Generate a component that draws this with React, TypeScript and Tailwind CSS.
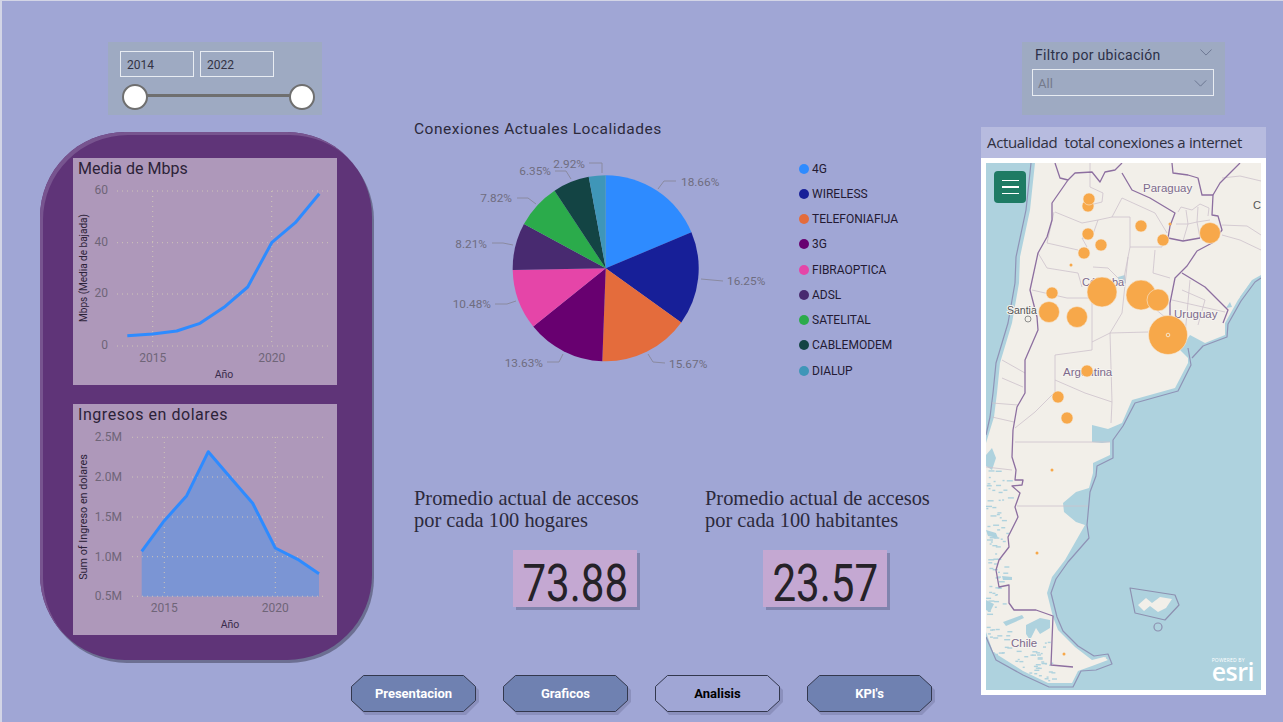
import React from "react";

const pieData = [
  { name: "4G", value: 18.66, color: "#2e8bff" },
  { name: "WIRELESS", value: 16.25, color: "#171f98" },
  { name: "TELEFONIAFIJA", value: 15.67, color: "#e46c3c" },
  { name: "3G", value: 13.63, color: "#680070" },
  { name: "FIBRAOPTICA", value: 10.48, color: "#e545a8" },
  { name: "ADSL", value: 8.21, color: "#482a70" },
  { name: "SATELITAL", value: 7.82, color: "#2bab4b" },
  { name: "CABLEMODEM", value: 6.35, color: "#134444" },
  { name: "DIALUP", value: 2.92, color: "#3f96b8" },
];

const pieLabels = [
  { text: "18.66%", x: 681, y: 182, anchor: "start", line: "658 189 664 181 676 181" },
  { text: "16.25%", x: 727, y: 281, anchor: "start", line: "701 279 723 281" },
  { text: "15.67%", x: 669, y: 364, anchor: "start", line: "648 354 653 362 665 363" },
  { text: "13.63%", x: 543, y: 363, anchor: "end", line: "563 354 559 362 547 362" },
  { text: "10.48%", x: 491, y: 304, anchor: "end", line: "516 301 507 304 495 304" },
  { text: "8.21%", x: 487, y: 244, anchor: "end", line: "513 245 503 243 492 243" },
  { text: "7.82%", x: 512, y: 198, anchor: "end", line: "536 204 528 198 517 198" },
  { text: "6.35%", x: 551, y: 171, anchor: "end", line: "571 179 566 171 555 171" },
  { text: "2.92%", x: 585, y: 164, anchor: "end", line: "602 173 602 163 589 163" },
];

const bubbles = [
  [1088, 206, 6], [1089, 199, 6], [1088, 234, 6], [1101, 245, 6], [1084, 253, 6], [1071, 265, 1.5],
  [1141, 226, 6], [1163, 240, 6], [1170, 224, 1.5], [1210, 233, 10.5], [1102, 292, 15], [1141, 295, 15],
  [1158, 300, 11], [1052, 293, 6], [1049, 312, 10.5], [1077, 317, 10.5], [1168, 335, 19.5],
  [1087, 371, 6], [1058, 397, 6], [1067, 418, 6], [1052, 470, 1.5], [1037, 553, 1.5], [1064, 654, 1.5],
];

const landPath =
  "M1035 163 L1030 210 L1020 257 L1019 283 L1012 323 L1000 363 L997 393 L994 417 L986 443 L986 632 L993 652 L1023 671 L1048 683 L1072 683 L1078 671 L1092 666 L1108 660 L1104 657 L1092 660 L1075 647 L1058 630 L1053 617 L1047 593 L1052 577 L1065 560 L1085 525 L1076 522 L1064 512 L1063 503 L1076 492 L1089 488 L1093 473 L1093 463 L1110 455 L1110 442 L1102 443 L1092 442 L1092 425 L1108 429 L1122 423 L1132 400 L1175 388 L1188 363 L1188 358 L1180 350 L1190 335 L1205 343 L1225 335 L1225 323 L1238 300 L1252 280 L1261 275 L1261 163 Z";

const coastLines = [
  "M986 637 L996 660 L1023 675 L1049 687 L1073 687 L1081 671 L1096 670 L1112 664 L1108 654 L1094 656 L1078 646 L1063 631 L1057 617 L1051 593 L1056 579 L1068 562 L1089 538 L1087 525 L1090 492 L1096 476 L1097 466 L1113 458 L1113 440 L1123 426 L1135 403 L1178 391 L1191 365 L1188 348",
  "M1031 163 L1026 210 L1016 257 L1015 283 L1008 323 L996 363 L993 393 L990 417 L986 435",
  "M1192 358 L1203 346 L1227 337 L1228 324 L1241 301 L1255 282 L1261 278",
];

const borders = [
  "M1055 163 L1060 178 L1068 180 L1052 203 L1052 220 L1047 237 L1038 253 L1030 290 L1037 317 L1038 330 L1025 360 L1025 393 L1017 407 L1013 430 L1012 457 L1016 470 L1015 480 L1023 480 L1022 485 L1012 486 L1020 493 L1015 507 L1018 517 L1008 537 L1009 547 L999 560 L996 570 L999 587 L1009 585 L1009 603 L1014 610 L1036 610 L1053 616 L1051 665 L1073 667",
  "M1068 180 L1075 173 L1092 172 L1100 182 L1105 172 L1115 170 L1122 163",
  "M1122 173 L1132 190 L1150 198 L1175 213 L1170 226 L1168 238 L1183 241 L1200 238",
  "M1172 163 L1173 173 L1188 175 L1198 178 L1202 195 L1213 195 L1212 215 L1218 216 L1222 230 L1212 243 L1197 251 L1187 266 L1175 278 L1170 303 L1170 333",
  "M1182 273 L1205 287 L1228 310 L1223 323",
  "M1240 163 L1220 183 L1213 195",
];

const provinces = [
  "M1090 163 L1090 187 L1103 193 L1102 202 L1090 205",
  "M1122 198 L1112 217 L1130 217 L1130 247 L1162 247 L1163 238",
  "M1122 198 L1155 213 L1167 233",
  "M1098 220 L1112 217 M1098 220 L1092 237 L1082 238 L1087 247 M1098 220 L1082 223 L1055 212",
  "M1130 247 L1123 283 L1108 268 L1093 267",
  "M1054 212 L1047 243 L1078 250 M1038 253 L1047 268 L1078 273 L1082 287",
  "M1032 290 L1067 298 L1092 298 L1092 350 L1055 355 L1055 392 L1035 412 L1015 428",
  "M1092 342 L1110 333 L1148 332 M1110 333 L1112 402 L1111 423",
  "M1055 380 L1085 393 L1112 402",
  "M1015 442 L1110 442 M1017 506 L1088 506",
  "M1155 250 L1153 273 L1170 278 M1128 257 L1122 313 L1110 333 M1148 303 L1172 323",
  "M1222 178 L1240 176 L1261 181 M1222 225 L1247 226 L1261 235 M1222 235 L1240 240 L1261 250",
  "M1178 212 L1181 207 L1192 210 L1200 204 L1209 208 L1208 216 M1186 210 L1188 224 L1183 241 M1198 207 L1197 222 L1200 238 M1176 224 L1188 224 L1197 222 L1210 220",
  "M1182 290 L1205 300 L1198 325 M1172 300 L1225 312 M1190 280 L1185 335",
  "M1002 378 L1023 387 M992 403 L1018 405 M992 417 L1014 422 M986 467 L1012 470 M1002 360 L1025 373",
];

// blue patches of the southern fjords
const fjordPatches = [
  "M1026 625 L1040 618 L1050 620 L1050 628 L1040 634 L1036 628 L1030 640 L1026 634 Z",
  "M1003 622 L1022 615 L1024 618 L1006 626 Z",
  "M1002 576 L1012 577 L1012 580 L1003 580 Z",
  "M986 530 L996 533 L998 538 L988 536 Z",
  "M986 600 L994 604 L990 612 L986 610 Z",
  "M986 455 L992 448 L996 458 L992 470 L986 466 Z",
];

const specks = Array.from({ length: 130 }, (_, i) => {
  const a = Math.abs(Math.sin(i * 12.9898) * 43758.5453) % 1;
  const b = Math.abs(Math.sin(i * 78.233) * 12543.1234) % 1;
  if (i % 3 === 0) return { x: 1012 + a * 40, y: 640 + b * 40, w: 2 + (i % 4) };
  return { x: 986 + a * (i % 2 ? 22 : 12), y: 470 + b * 185, w: 2 + (i % 5) };
});

function Pie() {
  const cx = 605.7;
  const cy = 268.3;
  const r = 93;
  const total = pieData.reduce((s, d) => s + d.value, 0);
  let acc = 0;
  return (
    <svg width="380" height="230" viewBox="414 150 380 230" className="block shrink-0">
      {pieData.map((d) => {
        const a0 = (acc / total) * 2 * Math.PI;
        acc += d.value;
        const a1 = (acc / total) * 2 * Math.PI;
        const large = a1 - a0 > Math.PI ? 1 : 0;
        const path = `M${cx} ${cy} L${cx + r * Math.sin(a0)} ${cy - r * Math.cos(a0)} A${r} ${r} 0 ${large} 1 ${cx + r * Math.sin(a1)} ${cy - r * Math.cos(a1)} Z`;
        return <path key={d.name} d={path} fill={d.color} />;
      })}
      {pieLabels.map((l) => (
        <g key={l.text}>
          <polyline points={l.line} fill="none" stroke="#8a8aa0" strokeWidth="1" />
          <text x={l.x} y={l.y} dy="4" textAnchor={l.anchor as "start" | "end"} fontSize="11.8" fill="#6f6d80" fontFamily="Roboto, sans-serif">
            {l.text}
          </text>
        </g>
      ))}
    </svg>
  );
}

function MbpsChart() {
  const ys = [[60, 191], [40, 242.7], [20, 294], [0, 346]];
  return (
    <svg viewBox="73 158 264 227" className="block absolute inset-0 w-full h-full">
      {ys.map(([t, y]) => (
        <g key={t}>
          <line x1="117" x2="329" y1={y} y2={y} stroke="#cfc5b8" strokeWidth="1" strokeDasharray="1 4" />
          <text x="108" y={y + 3} textAnchor="end" fontSize="12" fill="#6f6578" fontFamily="Roboto, sans-serif">{t}</text>
        </g>
      ))}
      <line x1="152.7" x2="152.7" y1="191" y2="346" stroke="#cfc5b8" strokeDasharray="1 4" />
      <line x1="271.7" x2="271.7" y1="191" y2="346" stroke="#cfc5b8" strokeDasharray="1 4" />
      <text x="152.7" y="362" textAnchor="middle" fontSize="12" fill="#6f6578" fontFamily="Roboto, sans-serif">2015</text>
      <text x="271.7" y="362" textAnchor="middle" fontSize="12" fill="#6f6578" fontFamily="Roboto, sans-serif">2020</text>
      <text x="224" y="378" textAnchor="middle" fontSize="10.5" fill="#3a2c4c" fontFamily="Roboto, sans-serif">Año</text>
      <text transform="translate(87 268) rotate(-90)" textAnchor="middle" fontSize="10" fill="#2c2238" fontFamily="Roboto, sans-serif">Mbps (Media de bajada)</text>
      <polyline
        points="127.3,335.7 152.7,334 176.7,331 200,323.3 224,307.3 247.7,287 271.7,242.7 295.3,222.7 319.3,193.7"
        fill="none"
        stroke="#2e8bff"
        strokeWidth="3"
        strokeLinejoin="round"
      />
    </svg>
  );
}

function IngresosChart() {
  const ys = [["2.5M", 437.3], ["2.0M", 477], ["1.5M", 517], ["1.0M", 556.7], ["0.5M", 596.3]] as const;
  const pts = "141.7,551.3 164.3,520.7 186.7,495.7 208.3,451.7 231,478.3 252.7,503.3 275.3,548 297.7,559.3 319,573.7";
  return (
    <svg viewBox="73 404 264 231" className="block absolute inset-0 w-full h-full">
      <polygon points={`141.7,596.5 ${pts} 319,596.5`} fill="#7b95d4" />
      {ys.map(([t, y]) => (
        <g key={t}>
          <line x1="132" x2="325" y1={y} y2={y} stroke="#cfc5b8" strokeWidth="1" strokeDasharray="1 4" />
          <text x="122" y={y + 4} textAnchor="end" fontSize="12" fill="#6f6578" fontFamily="Roboto, sans-serif">{t}</text>
        </g>
      ))}
      <line x1="164.3" x2="164.3" y1="437" y2="596" stroke="#cfc5b8" strokeDasharray="1 4" />
      <line x1="275.3" x2="275.3" y1="437" y2="596" stroke="#cfc5b8" strokeDasharray="1 4" />
      <text x="164.3" y="612" textAnchor="middle" fontSize="12" fill="#6f6578" fontFamily="Roboto, sans-serif">2015</text>
      <text x="275.3" y="612" textAnchor="middle" fontSize="12" fill="#6f6578" fontFamily="Roboto, sans-serif">2020</text>
      <text x="230" y="628" textAnchor="middle" fontSize="10.5" fill="#3a2c4c" fontFamily="Roboto, sans-serif">Año</text>
      <text transform="translate(87 517) rotate(-90)" textAnchor="middle" fontSize="10.8" fill="#2c2238" fontFamily="Roboto, sans-serif">Sum of Ingreso en dolares</text>
      <polyline points={pts} fill="none" stroke="#2e8bff" strokeWidth="3" strokeLinejoin="round" />
    </svg>
  );
}

function MapLabel({ x, y, children, size = 11.5 }: { x: number; y: number; children: string; size?: number }) {
  return (
    <text
      x={x}
      y={y}
      fontSize={size}
      fill="#7d6a8c"
      stroke="#f6f4f0"
      strokeWidth="2"
      paintOrder="stroke"
      fontFamily="Liberation Sans, sans-serif"
    >
      {children}
    </text>
  );
}

function ArgentinaMap() {
  return (
    <svg viewBox="986 163 275 527" className="block w-full h-full">
      <rect x="986" y="163" width="275" height="527" fill="#aed2de" />
      <path d={landPath} fill="#f2efe9" />
      <path d="M1240 297 l12 -16 l4 4 l-10 16 z M1226 308 l4 -6 l2 5 z M1118 277 l7 -2 l1 8 l-7 1 z" fill="#aed2de" />
      {fjordPatches.map((d) => (
        <path key={d} d={d} fill="#aed2de" />
      ))}
      {specks.map((s, i) => (
        <rect key={i} x={s.x} y={s.y} width={s.w} height="1.4" fill="#aed2de" />
      ))}
      {coastLines.map((d) => (
        <path key={d} d={d} fill="none" stroke="#8f93b6" strokeWidth="1.2" strokeLinejoin="round" />
      ))}
      {provinces.map((d) => (
        <path key={d} d={d} fill="none" stroke="#cdc2cc" strokeWidth="0.8" />
      ))}
      {borders.map((d) => (
        <path key={d} d={d} fill="none" stroke="#8d6fa0" strokeWidth="1.3" strokeLinejoin="round" />
      ))}
      <path d="M1130 588 L1175 595 L1179 605 L1165 620 L1135 613 Z" fill="#aed2de" stroke="#8d90b0" strokeWidth="1.2" strokeLinejoin="round" />
      <path d="M1138 605 L1146 598 L1152 603 L1160 597 L1172 599 L1166 608 L1158 612 L1150 606 L1144 611 Z" fill="#f2efe9" />
      <circle cx="1158" cy="627" r="4" fill="none" stroke="#8d90b0" strokeWidth="1.2" />
      <path d="M1098 660 l8 -3 l-1 3 l-6 2 z" fill="#f2efe9" />

      <MapLabel x={1143} y={192}>Paraguay</MapLabel>
      <text x={1253} y={209} fontSize="11" fill="#555" fontFamily="Liberation Sans, sans-serif">C</text>
      <MapLabel x={1082} y={286} size={11}>Córdoba</MapLabel>
      <text x={1007} y={314} fontSize="10.5" fill="#555" stroke="#f6f4f0" strokeWidth="2" paintOrder="stroke" fontFamily="Liberation Sans, sans-serif">Santia</text>
      <circle cx="1028" cy="319" r="3" fill="none" stroke="#777" strokeWidth="0.8" />
      <MapLabel x={1174} y={318}>Uruguay</MapLabel>
      <MapLabel x={1063} y={376}>Argentina</MapLabel>
      <MapLabel x={1011} y={647}>Chile</MapLabel>

      {bubbles.map(([x, y, r]) => (
        <circle key={`${x}-${y}`} cx={x} cy={y} r={r} fill="#f7a84a" stroke={r > 2 ? "#f5e9da" : "none"} strokeWidth="0.6" />
      ))}
      <circle cx="1168" cy="335" r="1.8" fill="none" stroke="#f6f1e6" strokeWidth="0.8" />
    </svg>
  );
}

function NavButton({ label, active }: { label: string; active?: boolean }) {
  return (
    <div className="relative w-[125px] h-[37px] flex items-center justify-center">
      <svg viewBox="0 0 129 41" className="absolute top-0 left-0 w-[129px] h-[41px]">
        <polygon points="14,3 115,3 128,15 128,27 115,40 14,40 3,27 3,15" fill="#8b90bd" />
        <polygon
          points="12.5,0.5 112.5,0.5 124.5,11.5 124.5,25.5 112.5,36.5 12.5,36.5 0.5,25.5 0.5,11.5"
          fill={active ? "#a0a6d5" : "#6f81b1"}
          stroke="#33384e"
          strokeWidth="1"
        />
      </svg>
      <span className={`relative mt-[1px] font-['Roboto',sans-serif] font-bold text-[13px] ${active ? "text-black" : "text-white"}`}>
        {label}
      </span>
    </div>
  );
}

function Chevron({ className }: { className: string }) {
  return (
    <svg viewBox="0 0 14 8" className={className} fill="none" stroke="#66708c" strokeWidth="1">
      <path d="M0.5 0.5 L7 7 L13.5 0.5" />
    </svg>
  );
}

function KpiCard({ value, className }: { value: string; className: string }) {
  return (
    <div className={`mt-[19px] w-[124px] h-[57px] bg-[#c4a8d2] shadow-[3px_3px_0_#8084ae] flex items-center justify-center font-['Roboto',sans-serif] text-[#252228] ${className}`}>
      <span className="inline-block mt-[10px] text-[52px] leading-none scale-x-[0.81]">{value}</span>
    </div>
  );
}

export default function App() {
  return (
    <div className="w-[1283px] h-[722px] overflow-hidden bg-[#a0a6d5] shadow-[inset_2px_1px_0_#d3d5e6] flex font-['Roboto',sans-serif]">
      <div className="w-[372px] shrink-0 pl-[40px] pt-[42px]">
        <div className="ml-[68px] w-[214px] h-[73px] bg-[#9eaac2] pl-[12px] pt-[9px]">
          <div className="flex gap-[6px]">
            <div className="w-[74px] h-[26px] border border-[#e8ecf2] flex items-center pl-[6px] pt-[1px] text-[12px] text-[#333344]">2014</div>
            <div className="w-[74px] h-[26px] border border-[#e8ecf2] flex items-center pl-[6px] pt-[1px] text-[12px] text-[#333344]">2022</div>
          </div>
          <div className="relative mt-[7px] h-[26px] w-[194px]">
            <div className="absolute left-[12px] right-[12px] top-[10px] h-[3px] bg-[#6f6f6f]" />
            <div className="absolute left-[2px] top-0 w-[26px] h-[26px] rounded-full bg-white border-2 border-[#6f6f6f]" />
            <div className="absolute left-[169px] top-0 w-[26px] h-[26px] rounded-full bg-white border-2 border-[#6f6f6f]" />
          </div>
        </div>
        <div className="mt-[17px] w-[332px] h-[528px] rounded-[85px] bg-[#5f3478] shadow-[2px_3px_0_#6c6f92,inset_3px_3px_0_#77548f] pt-[26px] pl-[33px] flex flex-col gap-[19px]">
          <div className="relative w-[264px] h-[227px] bg-[#ae98ba]">
            <MbpsChart />
            <div className="relative pl-[5px] pt-[1px] text-[16px] leading-[20px] text-[#2c2238]">Media de Mbps</div>
          </div>
          <div className="relative w-[264px] h-[231px] bg-[#ae98ba]">
            <IngresosChart />
            <div className="relative pl-[5px] pt-[1px] text-[16px] leading-[20px] tracking-[0.55px] text-[#2c2238]">Ingresos en dolares</div>
          </div>
        </div>
      </div>

      <div className="w-[609px] shrink-0 pl-[42px] pt-[119px]">
        <div className="text-[15.5px] leading-[20px] tracking-[0.5px] text-[#2c2a3c]">Conexiones Actuales Localidades</div>
        <div className="mt-[11px] flex h-[230px]">
          <Pie />
          <div className="ml-[5px] pt-[6px] flex flex-col h-[240px] shrink-0">
            {pieData.map((d) => (
              <div key={d.name} className="h-[25.25px] shrink-0 flex items-center gap-[3px] text-[12px] text-[#231a33]">
                <span className="w-[10px] h-[10px] rounded-full" style={{ backgroundColor: d.color }} />
                {d.name}
              </div>
            ))}
          </div>
        </div>

        <div className="mt-[107px] h-[120px] flex font-['Liberation_Serif',serif] text-[#2c2a3c] text-[20.4px] leading-[22px]">
          <div className="w-[291px]">
            <div>Promedio actual de accesos<br />por cada 100 hogares</div>
            <KpiCard value="73.88" className="ml-[99px]" />
          </div>
          <div>
            <div>Promedio actual de accesos<br />por cada 100 habitantes</div>
            <KpiCard value="23.57" className="ml-[58px]" />
          </div>
        </div>

        <div className="mt-[68px] -ml-[63px] flex gap-[27px]">
          <NavButton label="Presentacion" />
          <NavButton label="Graficos" />
          <NavButton label="Analisis" active />
          <NavButton label="KPI's" />
        </div>
      </div>

      <div className="w-[285px] shrink-0 pt-[42px]">
        <div className="ml-[41px] w-[203px] h-[73px] bg-[#9eaac2] relative">
          <div className="pl-[13px] pt-[3px] text-[14px] leading-[20px] tracking-[0.3px] text-[#2c3048]">Filtro por ubicación</div>
          <Chevron className="absolute right-[13px] top-[7px] w-[12px] h-[7px]" />
          <div className="mt-[4px] ml-[10px] w-[182px] h-[27px] border border-[#e8ecf2] flex items-center justify-between pl-[5px] pr-[6px] text-[13px] text-[#757a8c]">
            <span className="mt-[3px]">All</span>
            <Chevron className="w-[13px] h-[7px] mt-[1px]" />
          </div>
        </div>
        <div className="mt-[12px] h-[31px] bg-[#b7bbdf] pl-[6px] flex items-center font-['Open_Sans',sans-serif] text-[15px] tracking-[-0.35px] whitespace-pre text-[#2f3040]">
          Actualidad  total conexiones a internet
        </div>
        <div className="relative bg-white p-[5px] h-[537px]">
          <ArgentinaMap />
          <div className="absolute left-[13px] top-[13px] w-[32px] h-[32px] rounded-[4px] bg-[#1e7b64] flex flex-col items-center justify-center gap-[5px]">
            <span className="block w-[17px] h-[1.5px] bg-white" />
            <span className="block w-[17px] h-[1.5px] bg-white" />
            <span className="block w-[17px] h-[1.5px] bg-white" />
          </div>
          <div className="absolute right-[12px] bottom-[15px] text-white flex flex-col items-start font-['Open_Sans',sans-serif]">
            <span className="text-[5px] leading-[6px] tracking-[0.2px]">POWERED BY</span>
            <span className="text-[25px] font-semibold leading-[17px] tracking-[-0.5px]">esri</span>
          </div>
        </div>
      </div>
    </div>
  );
}
